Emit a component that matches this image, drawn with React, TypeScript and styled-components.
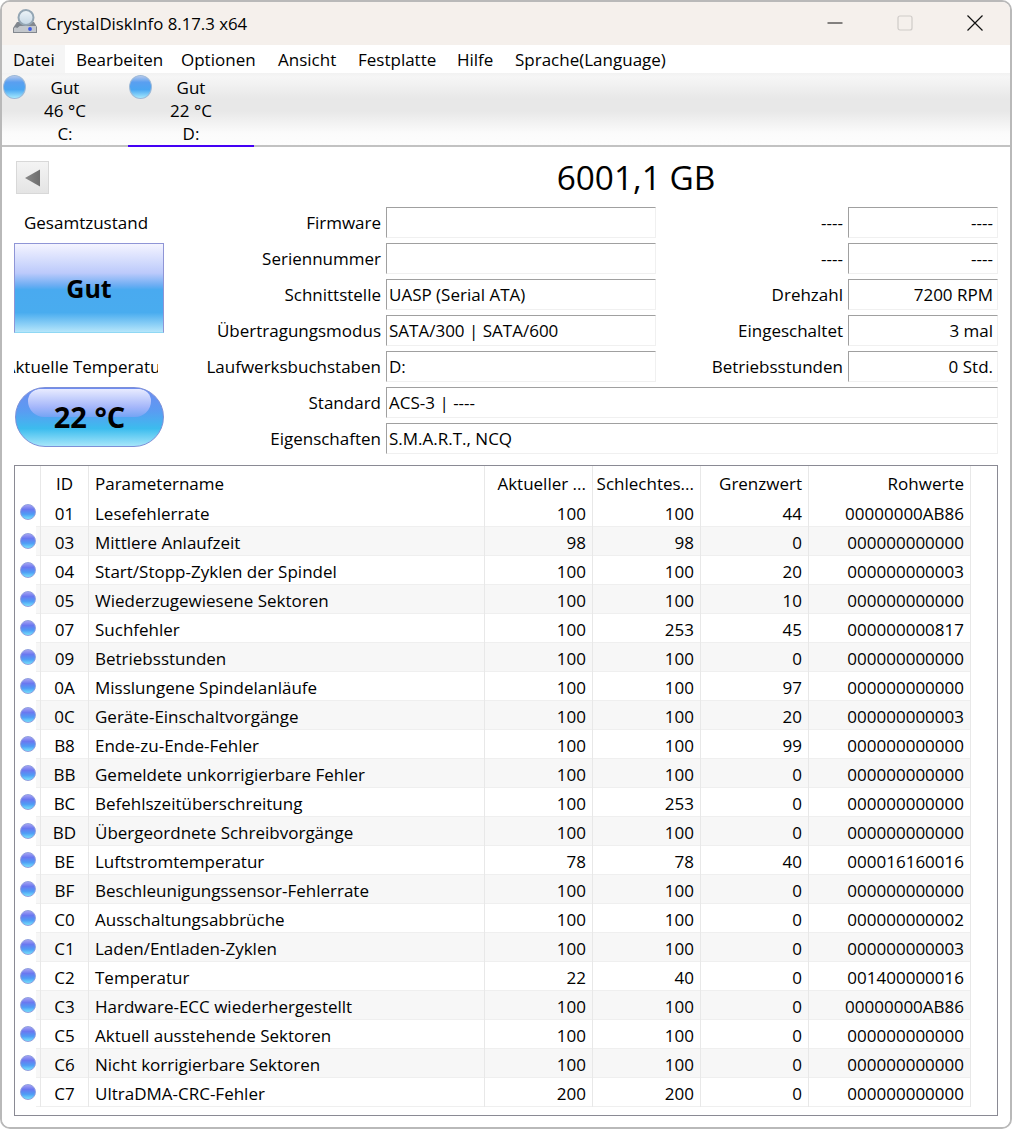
import React from 'react'
import styled, { createGlobalStyle } from 'styled-components'

const GlobalStyle = createGlobalStyle`
  html, body {
    margin: 0;
    padding: 0;
    background: #fff;
  }
  * {
    box-sizing: border-box;
  }
`

const Page = styled.div`
  width: 1012px;
  height: 1129px;
  background: #fff;
  font-family: 'Open Sans', 'Noto Sans', sans-serif;
  font-size: 17px;
  color: #000;
`
const Window = styled.div`
  width: 1012px;
  height: 1129px;
  border: 2px solid #b9b9b9;
  border-radius: 10px;
  overflow: hidden;
  display: flex;
  flex-direction: column;
`
const TitleBar = styled.div`
  height: 43px;
  flex: none;
  background: #f5f0ec;
  display: flex;
  align-items: center;
  padding: 0 0 2px 11px;
`
const TitleIcon = styled.svg`
  margin-bottom: 3px;
  flex: none;
`
const TitleText = styled.div`
  margin: 2px 0 0 7px;
  font-size: 16.8px;
  flex: 1;
`
const WinButton = styled.div`
  width: 70px;
  height: 41px;
  display: flex;
  align-items: center;
  justify-content: center;
`
const MenuBar = styled.div`
  height: 28px;
  flex: none;
  background: #fff;
  display: flex;
  align-items: stretch;
`
const MenuItem = styled.div<{ $active?: boolean; $w: number }>`
  width: ${({ $w }) => $w}px;
  flex: none;
  padding: 1px 0 0 11px;
  display: flex;
  align-items: center;
  white-space: nowrap;
  background: ${({ $active }) => ($active ? '#f5f5f5' : 'transparent')};
`
const DriveBar = styled.div`
  height: 74px;
  flex: none;
  display: flex;
  border-bottom: 2px solid #c2c2c2;
  background: linear-gradient(#f2f2f2 0, #f6f6f6 4px, #e8e8e8 26px, #e8e8e8 38px, #fbfbfb 60px, #fdfdfd 100%);
`
const DriveTab = styled.div<{ $selected?: boolean }>`
  width: 126px;
  height: 74px;
  position: relative;
  display: flex;
  flex-direction: column;
  align-items: center;
  padding: 3px 0 0 0;
  line-height: 23px;
  border-bottom: 2px solid ${({ $selected }) => ($selected ? '#4400f5' : 'transparent')};
`
const TabDot = styled.div`
  position: absolute;
  left: 1px;
  top: 2px;
  width: 23px;
  height: 24px;
  border-radius: 50%;
  border: 1px solid #9cb9d8;
  background: linear-gradient(#b4c8ec 0, #5a9ff0 28%, #4aa6f2 62%, #a4e8fd 100%);
`
const Main = styled.div`
  flex: 1;
  background: #fff;
  padding: 14px 12px 0 12px;
  display: flex;
  flex-direction: column;
`
const TopRow = styled.div`
  height: 46px;
  flex: none;
  display: flex;
  align-items: flex-start;
`
const BackButton = styled.div`
  width: 33px;
  height: 33px;
  margin-left: 2px;
  border: 1px solid #d8d8d8;
  background: linear-gradient(#f4f4f4, #e4e4e4);
  display: flex;
  align-items: center;
  justify-content: center;
`
const Capacity = styled.div`
  flex: 1;
  text-align: center;
  font-size: 33.4px;
  line-height: 33px;
  margin-left: 225px;
`
const InfoArea = styled.div`
  height: 258px;
  flex: none;
  display: flex;
`
const LeftPanel = styled.div`
  width: 152px;
  flex: none;
  display: flex;
  flex-direction: column;
  align-items: flex-start;
`
const PanelLabel = styled.div`
  width: 144px;
  height: 36px;
  line-height: 32px;
  white-space: nowrap;
  overflow: hidden;
  display: flex;
  justify-content: center;
`
const StatusBox = styled.div`
  width: 150px;
  height: 90px;
  margin-bottom: 18px;
  border: 1px solid #8f95d6;
  border-bottom-color: #8fd8f4;
  display: flex;
  align-items: center;
  justify-content: center;
  font-size: 25px;
  font-weight: 700;
  background: linear-gradient(#f4f4ff 0, #bccafb 33%, #6cadf3 47%, #49aaf0 52%, #49acef 78%, #b6e6fb 100%);
`
const TempPill = styled.div`
  position: relative;
  width: 149px;
  height: 60px;
  margin-left: 1px;
  border-radius: 30px;
  border: 1px solid #7d90d8;
  display: flex;
  align-items: center;
  justify-content: center;
  font-size: 29px;
  font-weight: 700;
  overflow: hidden;
  background: linear-gradient(#6f8cf0 0, #5a9cf2 40%, #3cbcee 70%, #a6e6fa 100%);
`
const PillShine = styled.div`
  position: absolute;
  top: 1px;
  left: 12px;
  right: 12px;
  height: 28px;
  border-radius: 18px 18px 24px 24px;
  background: linear-gradient(#e8ebff, #a4b6fa 65%, #74a4f4);
`
const PillText = styled.span`
  position: relative;
  margin-top: -2px;
`
const InfoGrid = styled.div`
  flex: 1;
  display: flex;
  flex-direction: column;
`
const InfoRow = styled.div`
  height: 36px;
  flex: none;
  display: flex;
`
const FieldLabel = styled.div<{ $w: number }>`
  width: ${({ $w }) => $w}px;
  flex: none;
  height: 31px;
  padding-right: 5px;
  display: flex;
  align-items: center;
  justify-content: flex-end;
  white-space: nowrap;
`
const FieldBox = styled.div<{ $w: number; $right?: boolean }>`
  width: ${({ $w }) => $w}px;
  flex: none;
  height: 31px;
  padding: 0 4px 0 2px;
  display: flex;
  align-items: center;
  justify-content: ${({ $right }) => ($right ? 'flex-end' : 'flex-start')};
  border-top: 1px solid #a0a0a0;
  border-left: 1px solid #a0a0a0;
  border-right: 1px solid #f0f0f0;
  border-bottom: 1px solid #f0f0f0;
  white-space: nowrap;
`
const SmartTable = styled.div`
  width: 984px;
  height: 651px;
  flex: none;
  border: 1px solid #8a8a94;
`
const TableRow = styled.div<{ $alt?: boolean; $head?: boolean }>`
  width: 956px;
  height: ${({ $head }) => ($head ? '32px' : '29px')};
  display: grid;
  grid-template-columns: 26px 48px 396px 108px 108px 108px 162px;
  align-items: stretch;
  background-repeat: no-repeat;
  background-image: ${({ $head }) => ($head ? 'none' : 'linear-gradient(#efefef, #efefef)')},
    linear-gradient(${({ $alt }) => ($alt ? '#f7f7f7, #f7f7f7' : 'transparent, transparent')});
  background-position: 21px 100%, 21px 0;
  background-size: calc(100% - 21px) 1px, calc(100% - 21px) 100%;
`
const Cell = styled.div<{ $align?: 'left' | 'right' | 'center' }>`
  display: flex;
  align-items: center;
  padding: 3px 6px 0 6px;
  justify-content: ${({ $align }) =>
    $align === 'right' ? 'flex-end' : $align === 'center' ? 'center' : 'flex-start'};
  border-right: 1px solid #e8e8e8;
  white-space: nowrap;
  overflow: hidden;
  line-height: 26px;
`
const DotCell = styled.div`
  border-right: 1px solid #e8e8e8;
  padding: 6px 0 0 5px;
`
const Dot = styled.div`
  width: 16px;
  height: 16px;
  border-radius: 50%;
  background: linear-gradient(#a5a1f2 0, #6a78f0 32%, #4f9cf5 66%, #74e0fb 100%);
  border: 1px solid #8f9fe0;
`

const attributes: [string, string, string, string, string, string][] = [
  ['01', 'Lesefehlerrate', '100', '100', '44', '00000000AB86'],
  ['03', 'Mittlere Anlaufzeit', '98', '98', '0', '000000000000'],
  ['04', 'Start/Stopp-Zyklen der Spindel', '100', '100', '20', '000000000003'],
  ['05', 'Wiederzugewiesene Sektoren', '100', '100', '10', '000000000000'],
  ['07', 'Suchfehler', '100', '253', '45', '000000000817'],
  ['09', 'Betriebsstunden', '100', '100', '0', '000000000000'],
  ['0A', 'Misslungene Spindelanläufe', '100', '100', '97', '000000000000'],
  ['0C', 'Geräte-Einschaltvorgänge', '100', '100', '20', '000000000003'],
  ['B8', 'Ende-zu-Ende-Fehler', '100', '100', '99', '000000000000'],
  ['BB', 'Gemeldete unkorrigierbare Fehler', '100', '100', '0', '000000000000'],
  ['BC', 'Befehlszeitüberschreitung', '100', '253', '0', '000000000000'],
  ['BD', 'Übergeordnete Schreibvorgänge', '100', '100', '0', '000000000000'],
  ['BE', 'Luftstromtemperatur', '78', '78', '40', '000016160016'],
  ['BF', 'Beschleunigungssensor-Fehlerrate', '100', '100', '0', '000000000000'],
  ['C0', 'Ausschaltungsabbrüche', '100', '100', '0', '000000000002'],
  ['C1', 'Laden/Entladen-Zyklen', '100', '100', '0', '000000000003'],
  ['C2', 'Temperatur', '22', '40', '0', '001400000016'],
  ['C3', 'Hardware-ECC wiederhergestellt', '100', '100', '0', '00000000AB86'],
  ['C5', 'Aktuell ausstehende Sektoren', '100', '100', '0', '000000000000'],
  ['C6', 'Nicht korrigierbare Sektoren', '100', '100', '0', '000000000000'],
  ['C7', 'UltraDMA-CRC-Fehler', '200', '200', '0', '000000000000'],
]

const menus: [string, number][] = [
  ['Datei', 63],
  ['Bearbeiten', 105],
  ['Optionen', 97],
  ['Ansicht', 80],
  ['Festplatte', 99],
  ['Hilfe', 58],
  ['Sprache(Language)', 170],
]

const AppIcon = () => (
  <TitleIcon width="26" height="26" viewBox="0 0 26 26">
    <defs>
      <linearGradient id="lens" x1="0" y1="0" x2="0" y2="1">
        <stop offset="0" stopColor="#eef4f8" />
        <stop offset="1" stopColor="#c4d6e4" />
      </linearGradient>
    </defs>
    <path d="M4 14 L0 20 V25 H24 V19 L21 14 Z" fill="#83888f" />
    <path d="M1 20 L6 18 H23 V24 H1 Z" fill="#c3c7cc" />
    <circle cx="17" cy="21" r="1.9" fill="#3f5ce6" />
    <path d="M8 15 L3 19" stroke="#7e858d" strokeWidth="3" />
    <circle cx="13" cy="9.5" r="7.5" fill="url(#lens)" stroke="#94a6b4" strokeWidth="2" />
  </TitleIcon>
)

const App: React.FC = () => {
  return (
    <Page>
      <GlobalStyle />
      <Window>
        <TitleBar>
          <AppIcon />
          <TitleText>CrystalDiskInfo 8.17.3 x64</TitleText>
          <WinButton>
            <svg width="16" height="16" viewBox="0 0 16 16">
              <path d="M0.5 8 H15.5" stroke="#111" strokeWidth="1" />
            </svg>
          </WinButton>
          <WinButton>
            <svg width="16" height="16" viewBox="0 0 16 16">
              <rect x="1" y="1" width="14" height="14" rx="2" fill="none" stroke="#cfcbc8" strokeWidth="1.2" />
            </svg>
          </WinButton>
          <WinButton>
            <svg width="16" height="16" viewBox="0 0 16 16">
              <path d="M0.5 0.5 L15.5 15.5 M15.5 0.5 L0.5 15.5" stroke="#111" strokeWidth="1.2" />
            </svg>
          </WinButton>
        </TitleBar>
        <MenuBar>
          {menus.map(([m, w], i) => (
            <MenuItem key={m} $active={i === 0} $w={w}>
              {m}
            </MenuItem>
          ))}
        </MenuBar>
        <DriveBar>
          <DriveTab>
            <TabDot />
            <span>Gut</span>
            <span>46 °C</span>
            <span>C:</span>
          </DriveTab>
          <DriveTab $selected>
            <TabDot />
            <span>Gut</span>
            <span>22 °C</span>
            <span>D:</span>
          </DriveTab>
        </DriveBar>
        <Main>
          <TopRow>
            <BackButton>
              <svg width="18" height="18" viewBox="0 0 18 18">
                <defs>
                  <linearGradient id="arrow" x1="0" y1="0" x2="1" y2="0">
                    <stop offset="0" stopColor="#8a8a8a" />
                    <stop offset="1" stopColor="#6e6e6e" />
                  </linearGradient>
                </defs>
                <path d="M16 0.5 V17.5 L1 9 Z" fill="url(#arrow)" />
              </svg>
            </BackButton>
            <Capacity>6001,1 GB</Capacity>
          </TopRow>
          <InfoArea>
            <LeftPanel>
              <PanelLabel>Gesamtzustand</PanelLabel>
              <StatusBox>Gut</StatusBox>
              <PanelLabel>Aktuelle Temperatur</PanelLabel>
              <TempPill>
                <PillShine />
                <PillText>22 °C</PillText>
              </TempPill>
            </LeftPanel>
            <InfoGrid>
              <InfoRow>
                <FieldLabel $w={220}>Firmware</FieldLabel>
                <FieldBox $w={270} />
                <FieldLabel $w={192}>----</FieldLabel>
                <FieldBox $w={150} $right>----</FieldBox>
              </InfoRow>
              <InfoRow>
                <FieldLabel $w={220}>Seriennummer</FieldLabel>
                <FieldBox $w={270} />
                <FieldLabel $w={192}>----</FieldLabel>
                <FieldBox $w={150} $right>----</FieldBox>
              </InfoRow>
              <InfoRow>
                <FieldLabel $w={220}>Schnittstelle</FieldLabel>
                <FieldBox $w={270}>UASP (Serial ATA)</FieldBox>
                <FieldLabel $w={192}>Drehzahl</FieldLabel>
                <FieldBox $w={150} $right>7200 RPM</FieldBox>
              </InfoRow>
              <InfoRow>
                <FieldLabel $w={220}>Übertragungsmodus</FieldLabel>
                <FieldBox $w={270}>SATA/300 | SATA/600</FieldBox>
                <FieldLabel $w={192}>Eingeschaltet</FieldLabel>
                <FieldBox $w={150} $right>3 mal</FieldBox>
              </InfoRow>
              <InfoRow>
                <FieldLabel $w={220}>Laufwerksbuchstaben</FieldLabel>
                <FieldBox $w={270}>D:</FieldBox>
                <FieldLabel $w={192}>Betriebsstunden</FieldLabel>
                <FieldBox $w={150} $right>0 Std.</FieldBox>
              </InfoRow>
              <InfoRow>
                <FieldLabel $w={220}>Standard</FieldLabel>
                <FieldBox $w={612}>ACS-3 | ----</FieldBox>
              </InfoRow>
              <InfoRow>
                <FieldLabel $w={220}>Eigenschaften</FieldLabel>
                <FieldBox $w={612}>S.M.A.R.T., NCQ</FieldBox>
              </InfoRow>
            </InfoGrid>
          </InfoArea>
          <SmartTable>
            <TableRow $head>
              <DotCell />
              <Cell $align="center">ID</Cell>
              <Cell>Parametername</Cell>
              <Cell $align="right">Aktueller ...</Cell>
              <Cell $align="right">Schlechtes...</Cell>
              <Cell $align="right">Grenzwert</Cell>
              <Cell $align="right">Rohwerte</Cell>
            </TableRow>
            {attributes.map(([id, name, cur, worst, limit, raw], i) => (
              <TableRow key={id} $alt={i % 2 === 1}>
                <DotCell>
                  <Dot />
                </DotCell>
                <Cell $align="center">{id}</Cell>
                <Cell>{name}</Cell>
                <Cell $align="right">{cur}</Cell>
                <Cell $align="right">{worst}</Cell>
                <Cell $align="right">{limit}</Cell>
                <Cell $align="right">{raw}</Cell>
              </TableRow>
            ))}
          </SmartTable>
        </Main>
      </Window>
    </Page>
  )
}

export default App
